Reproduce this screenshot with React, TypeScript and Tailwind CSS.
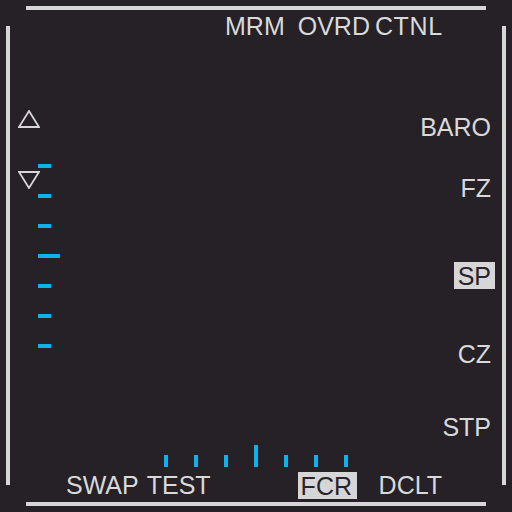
const text = "text-[25px] leading-[24px] text-[#d9d9d9]";
const boxed = "text-[25px] leading-[24px] bg-[#d6d6d6] text-[#28232c]";

function Triangle({ down = false }: { down?: boolean }) {
  return (
    <svg width="22" height="18" viewBox="0 0 22 18" className="block">
      <polygon
        points={down ? "1,1 21,1 11,17" : "11,1 21,17 1,17"}
        fill="none"
        stroke="#d6d6d6"
        strokeWidth="1.8"
        strokeLinejoin="miter"
      />
    </svg>
  );
}

export default function App() {
  const leftTicks = [13, 13, 13, 22, 13, 13, 13];
  const bottomTicks = [12, 12, 12, 22, 12, 12, 12];

  return (
    <div
      className="w-[512px] h-[512px] bg-[#252127] flex flex-col overflow-hidden"
      style={{ fontFamily: '"Liberation Sans", Arial, sans-serif' }}
    >
      {/* top frame line */}
      <div className="ml-[26px] mt-[6px] w-[460px] h-[4px] bg-[#d6d6d6]" />

      <div className="flex h-[492px]">
        <div className="ml-[6px] mt-[16px] w-[4px] h-[459px] bg-[#d6d6d6]" />

        <div className="flex-1 flex flex-col">
          {/* top OSB labels */}
          <div className={`flex mt-[4px] h-[24px] whitespace-pre ${text}`}>
            <span className="ml-[215px]">MRM</span>
            <span className="ml-[13px]">OVRD</span>
            <span className="ml-[5px] tracking-[0.6px]">CTNL</span>
          </div>

          {/* middle */}
          <div className="flex h-[407px]">
            <div className="flex flex-col ml-[8px] w-[22px]">
              <div className="mt-[72px]">
                <Triangle />
              </div>
              <div className="mt-[43px]">
                <Triangle down />
              </div>
            </div>
            <div className="flex flex-col gap-[26px] mt-[126px] ml-[-2px]">
              {leftTicks.map((w, i) => (
                <div key={i} className="h-[4px] bg-[#0ab4ea]" style={{ width: w }} />
              ))}
            </div>

            <div className="flex-1 flex flex-col items-end mr-[11px]">
              <span className={`mt-[77px] ${text}`}>BARO</span>
              <span className={`mt-[37px] ${text}`}>FZ</span>
              <span className={`mt-[62px] mr-[-4px] pl-[4px] pr-[4px] pt-[2px] pb-[1px] ${boxed}`}>SP</span>
              <span className={`mt-[53px] ${text}`}>CZ</span>
              <span className={`mt-[49px] ${text}`}>STP</span>
            </div>
          </div>

          {/* bottom ticks */}
          <div className="flex items-end gap-[26px] ml-[154px] h-[22px]">
            {bottomTicks.map((h, i) => (
              <div key={i} className="w-[4px] bg-[#0ab4ea]" style={{ height: h }} />
            ))}
          </div>

          {/* bottom OSB labels */}
          <div className="flex items-start mt-[5px]">
            <span className={`ml-[56px] mt-[1px] ${text}`}>SWAP</span>
            <span className={`ml-[8px] mt-[1px] ${text}`}>TEST</span>
            <span className={`ml-[87px] w-[59px] pl-[3px] pt-[2px] pb-[1px] ${boxed}`}>FCR</span>
            <span className={`ml-[22px] mt-[1px] ${text}`}>DCLT</span>
          </div>
        </div>

        <div className="mr-[6px] mt-[16px] w-[4px] h-[459px] bg-[#d6d6d6]" />
      </div>

      {/* bottom frame line */}
      <div className="ml-[26px] w-[460px] h-[4px] bg-[#d6d6d6]" />
    </div>
  );
}
